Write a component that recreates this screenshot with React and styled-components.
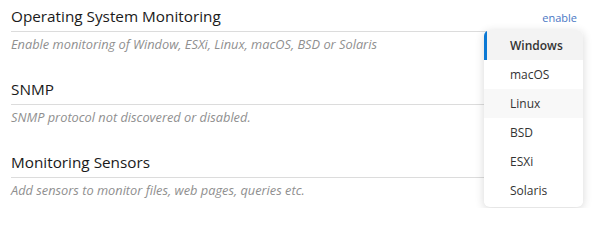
import React from "react";
import styled, { createGlobalStyle } from "styled-components";

const Global = createGlobalStyle`
  html, body { margin: 0; padding: 0; background: #fff; }
  body { font-family: "Open Sans", "Noto Sans", sans-serif; color: #222; }
`;

const Page = styled.div`
  position: relative;
  width: 604px;
  height: 208px;
  overflow: hidden;
  padding: 5px 27px 0 11px;
  box-sizing: border-box;
`;

const Section = styled.section`
  margin-bottom: 25px;
`;

const Header = styled.div`
  display: flex;
  align-items: center;
  justify-content: space-between;
  border-bottom: 1px solid #dcdcdc;
  padding-bottom: 4px;
  height: 22px;
`;

const Title = styled.h2`
  margin: 0;
  font-size: 15.3px;
  font-weight: 400;
  line-height: 22px;
  color: #1a1a1a;
`;

const Action = styled.a`
  font-size: 11px;
  color: #4a77c4;
  text-decoration: none;
  cursor: pointer;
  margin-top: 2px;
`;

const Desc = styled.p`
  margin: 3px 0 0;
  font-size: 12.8px;
  font-style: italic;
  line-height: 18px;
  color: #8f8f8f;
`;

const Menu = styled.ul`
  position: absolute;
  left: 484px;
  top: 30px;
  width: 99px;
  margin: 0;
  padding: 0 0 2px;
  list-style: none;
  background: #fff;
  border-radius: 6px;
  box-shadow: 0 2px 10px rgba(0, 0, 0, 0.16);
  overflow: hidden;
`;

const Item = styled.li`
  height: ${(p) => (p.$active ? "30px" : "29px")};
  display: flex;
  align-items: center;
  padding-left: ${(p) => (p.$active ? "23px" : "26px")};
  font-size: 12px;
  font-weight: ${(p) => (p.$active ? 600 : 400)};
  color: #333;
  background: ${(p) => (p.$active ? "#f3f3f3" : p.$hover ? "#f8f8f8" : "#fff")};
  border-left: ${(p) => (p.$active ? "3px solid #0a78d4" : "none")};
`;

const sections = [
  { title: "Operating System Monitoring", desc: "Enable monitoring of Window, ESXi, Linux, macOS, BSD or Solaris", action: "enable" },
  { title: "SNMP", desc: "SNMP protocol not discovered or disabled." },
  { title: "Monitoring Sensors", desc: "Add sensors to monitor files, web pages, queries etc." },
];

const options = ["Windows", "macOS", "Linux", "BSD", "ESXi", "Solaris"];

export default function App() {
  return (
    <>
      <Global />
      <Page>
        {sections.map((s) => (
          <Section key={s.title}>
            <Header>
              <Title>{s.title}</Title>
              {s.action && <Action>{s.action}</Action>}
            </Header>
            <Desc>{s.desc}</Desc>
          </Section>
        ))}
        <Menu>
          {options.map((o, i) => (
            <Item key={o} $active={i === 0} $hover={i === 2}>
              {o}
            </Item>
          ))}
        </Menu>
      </Page>
    </>
  );
}
